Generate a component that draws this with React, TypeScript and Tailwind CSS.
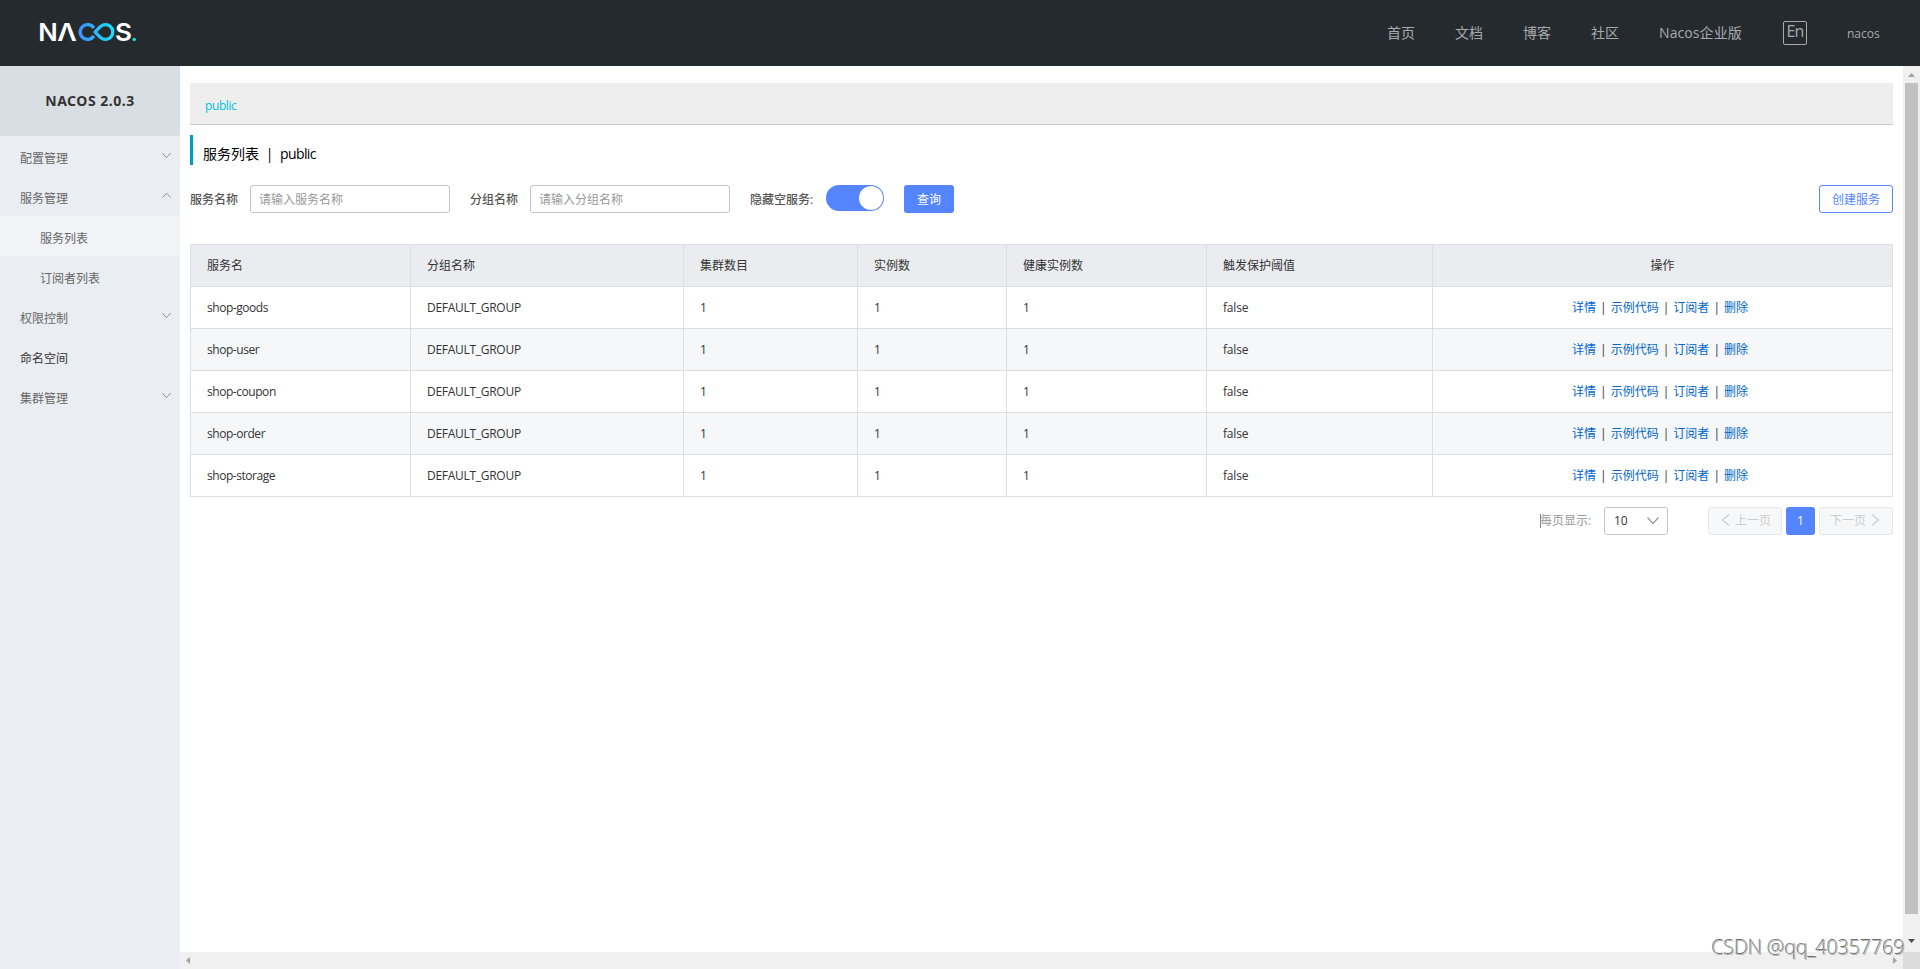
import { type ReactElement, type ReactNode } from "react";

type NavItem = {
  label: string;
  level: 1 | 2;
  arrow?: "down" | "up";
  active?: boolean;
  dark?: boolean;
};

type ServiceRow = {
  name: string;
  group: string;
  clusters: number;
  instances: number;
  healthy: number;
  threshold: string;
};

const NAV_ITEMS: NavItem[] = [
  { label: "配置管理", level: 1, arrow: "down" },
  { label: "服务管理", level: 1, arrow: "up" },
  { label: "服务列表", level: 2, active: true },
  { label: "订阅者列表", level: 2 },
  { label: "权限控制", level: 1, arrow: "down" },
  { label: "命名空间", level: 1, dark: true },
  { label: "集群管理", level: 1, arrow: "down" },
];

const SERVICES: ServiceRow[] = ["shop-goods", "shop-user", "shop-coupon", "shop-order", "shop-storage"].map((name) => ({
  name,
  group: "DEFAULT_GROUP",
  clusters: 1,
  instances: 1,
  healthy: 1,
  threshold: "false",
}));

const COLUMNS = ["服务名", "分组名称", "集群数目", "实例数", "健康实例数", "触发保护阈值"];
const ACTIONS = ["详情", "示例代码", "订阅者", "删除"];
const GRID = "grid grid-cols-[220px_273px_174px_149px_200px_226px_460px]";

function Logo(): ReactElement {
  return (
    <svg width="98" height="22" viewBox="0 0 98 22" fill="none" className="overflow-visible" aria-label="NACOS.">
      <defs>
        <linearGradient id="loop" x1="36" y1="0" x2="76" y2="0" gradientUnits="userSpaceOnUse">
          <stop offset="0" stopColor="#4289ff" />
          <stop offset="1" stopColor="#16e4fa" />
        </linearGradient>
      </defs>
      <g className="fill-white font-['Inter'] text-[24.5px] font-semibold">
        <text x="-1.7" y="20" textLength="19.5" lengthAdjust="spacingAndGlyphs">
          N
        </text>
        <text x="17.3" y="20" textLength="19.5" lengthAdjust="spacingAndGlyphs">
          Λ
        </text>
        <text x="75" y="20" textLength="17" lengthAdjust="spacingAndGlyphs">
          S
        </text>
      </g>
      <path
        d="M53.8 7A7.4 7.4 0 1 0 53.8 15M55 11L60.8 5.2A7.4 7.4 0 1 1 60.8 16.8Z"
        stroke="url(#loop)"
        strokeWidth="3.3"
        strokeLinejoin="round"
      />
      <circle cx="94.2" cy="18.4" r="1.7" fill="#16e4fa" />
    </svg>
  );
}

function Chevron({ dir, className }: { dir: "up" | "down" | "left" | "right"; className?: string }): ReactElement {
  const d = {
    up: "M.5 7.5L6 1.5L11.5 7.5",
    down: "M.5 1.5L6 7.5L11.5 1.5",
    left: "M8 .5L1.5 6L8 11.5",
    right: "M1 .5L7.5 6L1 11.5",
  }[dir];
  const box = dir === "up" || dir === "down" ? "0 0 12 9" : "0 0 9 12";
  return (
    <svg viewBox={box} fill="none" stroke="currentColor" strokeWidth="1.2" className={className}>
      <path d={d} />
    </svg>
  );
}

function TopBar(): ReactElement {
  return (
    <header className="flex h-[66px] shrink-0 items-center justify-between bg-[#252a2f] pl-10 pr-10">
      <div className="-mt-0.5">
        <Logo />
      </div>
      <nav className="flex items-center gap-10 text-sm text-[#a8aaac]">
        <span>首页</span>
        <span>文档</span>
        <span>博客</span>
        <span>社区</span>
        <span className="w-[84px] tracking-[0.1px] whitespace-nowrap">Nacos企业版</span>
        <span className="flex h-6 w-6 items-center justify-center rounded-xs border border-[#a8aaac] pb-1 text-base tracking-[-0.8px]">
          En
        </span>
        <span className="w-[33px] pt-0.5 text-xs font-medium">nacos</span>
      </nav>
    </header>
  );
}

function SideNav(): ReactElement {
  return (
    <aside className="w-[180px] shrink-0 bg-[#eaedf1]">
      <h1 className="flex h-[70px] items-center justify-center bg-[#d9dee4] font-['Noto_Sans'] text-sm font-bold tracking-[0.5px] text-[#333]">
        NACOS 2.0.3
      </h1>
      <ul>
        {NAV_ITEMS.map((item) => (
          <li
            key={item.label}
            className={`flex h-10 items-center justify-between pr-[9px] ${item.level === 1 ? "pl-5" : "pl-10"} ${
              item.active ? "bg-[#f1f3f7]" : ""
            } ${item.dark ? "text-[#333]" : "text-[#666]"}`}
          >
            <span className="pt-1.5">{item.label}</span>
            {item.arrow ? <Chevron dir={item.arrow} className="mb-px w-[9px] text-[#888]" /> : null}
          </li>
        ))}
      </ul>
    </aside>
  );
}

function Field({ label, placeholder }: { label: string; placeholder: string }): ReactElement {
  return (
    <label className="mr-5 flex items-center">
      <span className="mr-3 pt-0.5 font-medium text-[#555]">{label}</span>
      <input
        placeholder={placeholder}
        className="h-7 w-[200px] rounded-[3px] border border-[#c4c6cf] bg-white px-2 text-xs placeholder:text-[#999]"
      />
    </label>
  );
}

function Cell({ className = "", children }: { className?: string; children: ReactNode }): ReactElement {
  return (
    <div className={`flex items-center border-r border-b border-[#dcdee3] px-4 ${className}`}>{children}</div>
  );
}

function ServiceTable(): ReactElement {
  return (
    <div className="mt-[31px] w-[1703px] border-t border-l border-[#dcdee3] text-[#333]">
      <div className={`${GRID} h-[42px] bg-[#ebecf0]`}>
        {COLUMNS.map((c) => (
          <Cell key={c}>{c}</Cell>
        ))}
        <div className="flex items-center justify-center border-r border-b border-[#dcdee3]">操作</div>
      </div>
      {SERVICES.map((s, i) => (
        <div key={s.name} className={`${GRID} h-[42px] ${i % 2 === 1 ? "bg-[#f5f7f9]" : "bg-white"}`}>
          <Cell className="tracking-[-0.45px]">{s.name}</Cell>
          <Cell className="tracking-[-0.28px]">{s.group}</Cell>
          <Cell>{s.clusters}</Cell>
          <Cell>{s.instances}</Cell>
          <Cell>{s.healthy}</Cell>
          <Cell className="tracking-[-0.2px]">{s.threshold}</Cell>
          <div className="flex items-center justify-center border-r border-b border-[#dcdee3] pr-[5px]">
            {ACTIONS.map((a, j) => (
              <span key={a} className="flex">
                {j > 0 ? <span className="w-[14.67px] text-center">|</span> : null}
                <a className="text-[#06c]">{a}</a>
              </span>
            ))}
          </div>
        </div>
      ))}
    </div>
  );
}

function Pagination(): ReactElement {
  return (
    <div className="mt-2.5 flex h-7 items-center justify-end">
      <span className="mr-2.5 flex w-[54px] items-center text-[#999]">
        <span className="-mr-px h-3.5 w-px shrink-0 bg-[#888]" />
        <span className="whitespace-nowrap">每页显示:</span>
      </span>
      <div className="mr-10 flex h-7 w-16 items-center justify-between rounded-[3px] border border-[#c4c6cf] pr-2 pl-[9px] text-[#333]">
        10
        <Chevron dir="down" className="mb-0.5 w-3 text-[#999]" />
      </div>
      <div className="mr-1 flex h-7 w-[74px] items-center justify-center gap-[5px] rounded-[3px] border border-[#e6e7eb] bg-[#f7f8fa] pl-0.5 text-[#ccc]">
        <Chevron dir="left" className="mb-0.5 w-[9px]" />
        上一页
      </div>
      <div className="mr-1 flex h-7 w-[29px] items-center justify-center rounded-[3px] bg-[#5584ff] text-white">1</div>
      <div className="flex h-7 w-[74px] items-center justify-center gap-[5px] rounded-[3px] border border-[#e6e7eb] bg-[#f7f8fa] pr-0.5 text-[#ccc]">
        下一页
        <Chevron dir="right" className="mb-0.5 w-[9px]" />
      </div>
    </div>
  );
}

function ServiceList(): ReactElement {
  return (
    <main className="min-w-0 flex-1 bg-white pt-[17px] pr-2.5 pl-2.5">
      <div className="flex h-[42px] items-center border-b border-[#ccc] bg-[#eee] pt-1 pl-[15px] tracking-[-0.4px] text-[#00c1de]">
        public
      </div>
      <h2 className="mt-2.5 flex h-[30px] items-center border-l-[3px] border-[#09c] pt-2 pl-2.5 text-sm text-black">
        <span>服务列表</span>
        <span className="w-[21px] text-center">|</span>
        <span className="tracking-[-0.6px]">public</span>
      </h2>
      <div className="mt-5 flex h-7 items-center">
        <Field label="服务名称" placeholder="请输入服务名称" />
        <Field label="分组名称" placeholder="请输入分组名称" />
        <span className="mr-3 w-16 pt-0.5 font-medium whitespace-nowrap text-[#555]">隐藏空服务:</span>
        <span className="mr-5 flex h-[26px] w-[58px] justify-end self-start rounded-full bg-[#5584ff] p-px">
          <span className="h-6 w-6 rounded-full bg-white" />
        </span>
        <button type="button" className="h-7 w-[50px] rounded-[3px] bg-[#5584ff] pt-0.5 text-white">
          查询
        </button>
        <button
          type="button"
          className="ml-auto h-7 w-[74px] rounded-[3px] border border-[#5584ff] bg-white pt-0.5 text-[#5584ff]"
        >
          创建服务
        </button>
      </div>
      <ServiceTable />
      <Pagination />
    </main>
  );
}

function Scroller(): ReactElement {
  return (
    <div className="flex w-[17px] shrink-0 flex-col items-center bg-[#f0f0f0]">
      <svg width="17" height="17" fill="#a3a3a3">
        <path d="M5 11H12L8.5 7Z" />
      </svg>
      <div className="h-[831px] w-[13px] bg-[#c1c1c1]" />
      <svg width="17" height="17" fill="#505050" className="mt-auto mb-0.5">
        <path d="M5 6H12L8.5 10Z" />
      </svg>
    </div>
  );
}

export default function App(): ReactElement {
  return (
    <div className="relative flex h-[969px] w-[1920px] flex-col overflow-hidden bg-white font-['Open_Sans','Noto_Sans_CJK_SC',sans-serif] text-xs">
      <TopBar />
      <div className="flex min-h-0 flex-1">
        <SideNav />
        <div className="flex min-w-0 flex-1 flex-col">
          <div className="flex min-h-0 flex-1">
            <ServiceList />
            <Scroller />
          </div>
          <div className="flex h-[17px] shrink-0 justify-between bg-[#f0f0f0]">
            <svg width="17" height="17" fill="#a3a3a3">
              <path d="M10 5V12L6 8.5Z" />
            </svg>
            <div className="flex">
              <svg width="17" height="17" fill="#a3a3a3">
                <path d="M7 5V12L11 8.5Z" />
              </svg>
              <div className="h-[17px] w-[17px] bg-[#dcdcdc]" />
            </div>
          </div>
        </div>
      </div>
      <div className="absolute right-[15px] bottom-[7px] text-[20px] leading-7 font-light tracking-[-0.3px] whitespace-nowrap text-[#b4b4b4] [text-shadow:-1px_-1px_0_#707070]">
        CSDN @qq_40357769
      </div>
    </div>
  );
}
